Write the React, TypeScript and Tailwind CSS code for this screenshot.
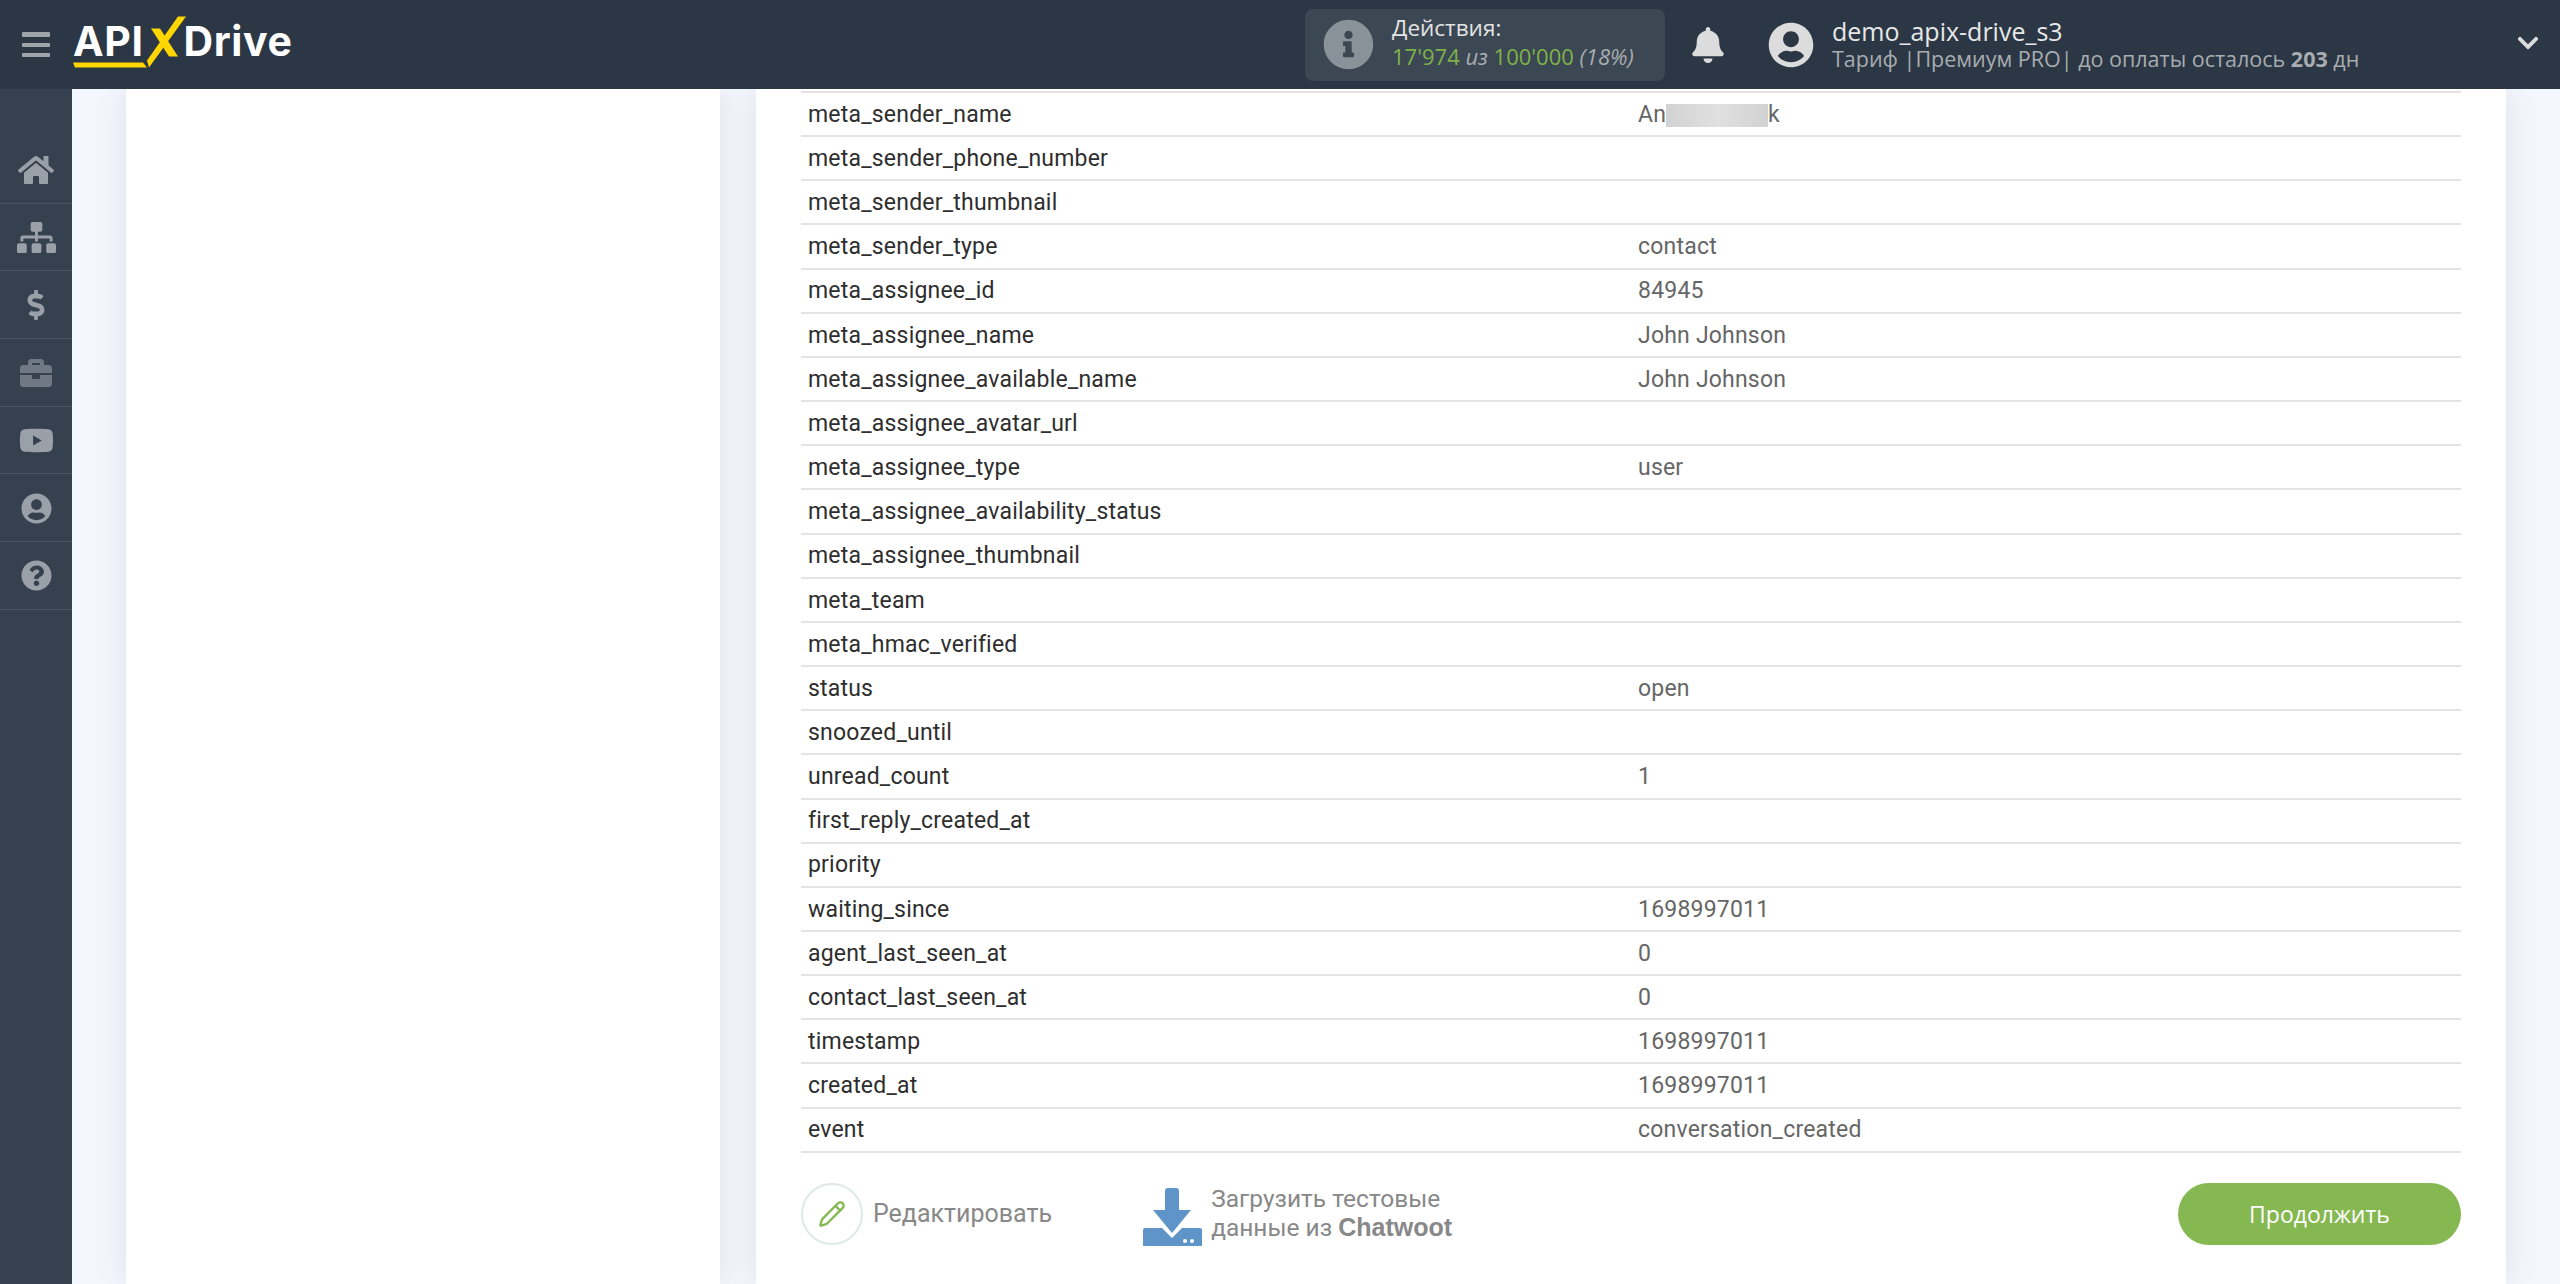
import React from "react";
import { FaBell, FaBriefcase, FaChevronDown, FaDollarSign, FaHome, FaInfoCircle, FaQuestionCircle, FaSitemap, FaUserCircle, FaYoutube } from "react-icons/fa";
import { Pencil } from "lucide-react";

const rows: [string, React.ReactNode][] = [
  ["meta_sender_name", <span className="inline-flex items-center">An<span className="inline-block w-[102px] h-[23px] bg-gradient-to-r from-[#d2d2d2] via-[#e0e0e0] to-[#d2d2d2]" />k</span>],
  ["meta_sender_phone_number", ""],
  ["meta_sender_thumbnail", ""],
  ["meta_sender_type", "contact"],
  ["meta_assignee_id", "84945"],
  ["meta_assignee_name", "John Johnson"],
  ["meta_assignee_available_name", "John Johnson"],
  ["meta_assignee_avatar_url", ""],
  ["meta_assignee_type", "user"],
  ["meta_assignee_availability_status", ""],
  ["meta_assignee_thumbnail", ""],
  ["meta_team", ""],
  ["meta_hmac_verified", ""],
  ["status", "open"],
  ["snoozed_until", ""],
  ["unread_count", "1"],
  ["first_reply_created_at", ""],
  ["priority", ""],
  ["waiting_since", "1698997011"],
  ["agent_last_seen_at", "0"],
  ["contact_last_seen_at", "0"],
  ["timestamp", "1698997011"],
  ["created_at", "1698997011"],
  ["event", "conversation_created"],
];

const nav = [
  { icon: <FaHome size={36} /> , color: "text-[#9aa0a7]" },
  { icon: <FaSitemap size={39} />, color: "text-[#9aa0a7]" },
  { icon: <FaDollarSign size={30} />, color: "text-[#9aa0a7]" },
  { icon: <FaBriefcase size={32} />, color: "text-[#6f7883]" },
  { icon: <FaYoutube size={35} />, color: "text-[#9aa0a7]" },
  { icon: <FaUserCircle size={31} />, color: "text-[#9aa0a7]" },
  { icon: <FaQuestionCircle size={31} />, color: "text-[#9aa0a7]" },
];

function Logo() {
  return (
    <div className="relative w-[225px] h-[60px] ml-[23px] flex items-center pb-[6px] font-['Inter',sans-serif] font-bold text-white text-[41px] leading-none tracking-[0.6px]">
      <span>API</span>
      <span className="ml-[40px]">Drive</span>
      <svg className="absolute left-0 top-0" width="120" height="60" viewBox="73 14.5 120 60" fill="#ffd600">
        <polygon points="73,62 143,62 147,67 75,67" />
        <polygon points="178,16 186,16 149,67 147,60" />
        <polygon points="151,28 160,28 178,56 169,56" />
      </svg>
    </div>
  );
}

function DownloadIcon() {
  return (
    <svg className="translate-y-[3px] ml-px" width="60" height="60" viewBox="0 0 60 60" fill="#5e94c8">
      <rect x="22" y="1" width="14" height="26" rx="3" />
      <polygon points="10,23 48,23 29,46" />
      <path d="M2 41 H19 L29 51 L39 41 H57 a2 2 0 0 1 2 2 V59 H0 V43 a2 2 0 0 1 2 -2 Z" />
      <circle cx="42" cy="54" r="2" fill="#fff" />
      <circle cx="49" cy="54" r="2" fill="#fff" />
    </svg>
  );
}

export default function App() {
  return (
    <div className="h-screen overflow-hidden flex flex-col bg-[#f3f6fc] font-['Roboto',sans-serif]">
      <header className="relative z-10 h-[89px] shrink-0 bg-[#2b3744] flex items-center font-['Open_Sans',sans-serif]">
        <div className="w-[28px] ml-[22px] flex flex-col gap-[6px]">
          <span className="h-[5px] rounded-[1px] bg-[#a0a5a9]" />
          <span className="h-[4px] rounded-[1px] bg-[#a0a5a9]" />
          <span className="h-[4px] rounded-[1px] bg-[#a0a5a9]" />
        </div>
        <Logo />
        <div className="ml-[1007px] w-[360px] h-[72px] rounded-[8px] bg-[#3b4752] flex items-center pl-[18px]">
          <FaInfoCircle size={51} className="text-[#8a9299]" />
          <div className="ml-[18px] leading-[28px] text-[22px] pb-[6px]">
            <div className="text-[#e4e4e4] text-[22.5px]">Действия:</div>
            <div className="italic text-[#a8acb0]">
              <span className="not-italic text-[#7fb24a]">17'974</span> из{" "}
              <span className="not-italic text-[#7fb24a]">100'000</span> (18%)
            </div>
          </div>
        </div>
        <FaBell size={36} className="ml-[25px] text-[#dcdcdc]" />
        <FaUserCircle size={46} className="ml-[42px] text-[#dcdcdc]" />
        <div className="ml-[18px] text-[#a8acb0] text-[21.5px] leading-[28px]">
          <div className="text-[25px] text-[#e8e8e8]">demo_apix-drive_s3</div>
          <div>Тариф |Премиум PRO| до оплаты осталось <b>203</b> дн</div>
        </div>
        <FaChevronDown size={24} className="ml-auto mr-[20px] mb-[3px] text-[#dcdcdc]" />
      </header>
      <div className="flex-1 flex min-h-0">
        <nav className="w-[72px] shrink-0 bg-[#364150] pt-[47px]">
          {nav.map((n, i) => (
            <div key={i} className={`h-[67.7px] border-b border-[#4a5462] flex items-center justify-center pt-[1px] ${n.color}`}>
              {n.icon}
            </div>
          ))}
        </nav>
        <main className="flex-1 flex gap-[36px] px-[54px] min-w-0">
          <section className="w-[594px] shrink-0 bg-white shadow-[0_0_30px_rgba(0,0,0,0.09)]" />
          <section className="flex-1 bg-white shadow-[0_0_30px_rgba(0,0,0,0.09)] pt-[3px] px-[45px]">
            <div className="border-t-2 border-[#e4e4e4] -mt-px">
              {rows.map(([k, v]) => (
                <div key={k} className="h-[44.17px] border-b-2 border-[#e4e4e4] grid grid-cols-[830px_1fr] pl-[7px] pt-[2px] items-center text-[23px] tracking-[0.2px]">
                  <div className="text-[#2e2e2e]">{k}</div>
                  <div className="text-[#666]">{v}</div>
                </div>
              ))}
            </div>
            <div className="mt-[30px] flex items-center">
              <div className="w-[62px] h-[62px] rounded-full border-2 border-[#dfe9e8] flex items-center justify-center">
                <Pencil size={28} strokeWidth={2} className="text-[#86b851]" />
              </div>
              <span className="ml-[10px] text-[25px] text-[#888]">Редактировать</span>
              <div className="ml-[90px] flex items-center">
                <DownloadIcon />
                <div className="ml-[8px] text-[24.5px] leading-[29px] text-[#888] pb-[2px]">
                  <div>Загрузить тестовые</div>
                  <div>данные из <b className="font-['Liberation_Sans',sans-serif] text-[25px]">Chatwoot</b></div>
                </div>
              </div>
              <button className="ml-auto w-[283px] h-[62px] rounded-full bg-[#86b851] text-white text-[23px] font-['Open_Sans',sans-serif]">
                Продолжить
              </button>
            </div>
          </section>
        </main>
      </div>
    </div>
  );
}
